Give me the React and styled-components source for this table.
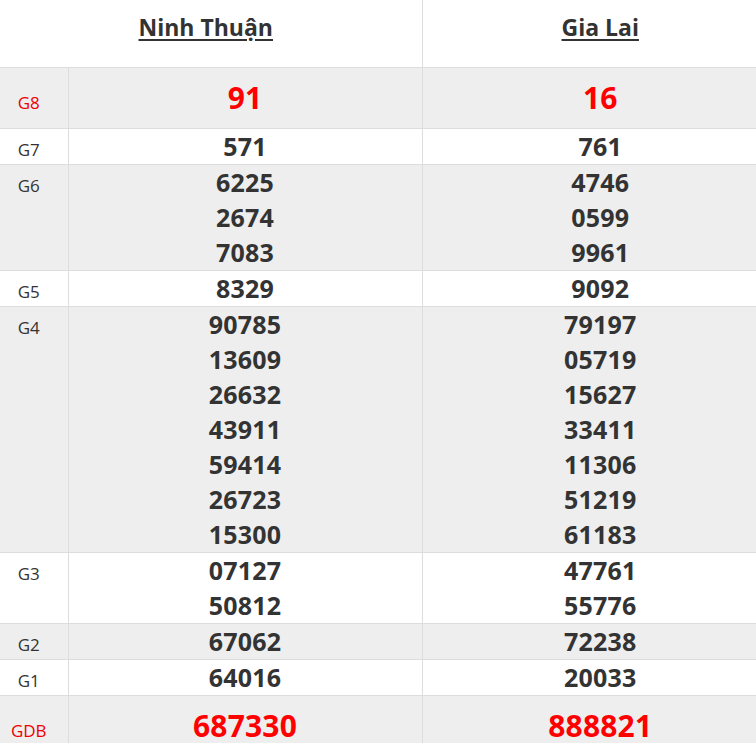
import React from 'react'
import styled, {createGlobalStyle} from 'styled-components'

const GlobalStyle = createGlobalStyle`
    html, body {
        margin: 0;
        padding: 0;
        background: #fff;
        overflow: hidden;
    }
    body {
        font-family: "Open Sans", "Liberation Sans", sans-serif;
        color: #333;
    }
`

const prizes = [
    {label: 'G8', big: true, a: ['91'], b: ['16']},
    {label: 'G7', a: ['571'], b: ['761']},
    {label: 'G6', a: ['6225', '2674', '7083'], b: ['4746', '0599', '9961']},
    {label: 'G5', a: ['8329'], b: ['9092']},
    {
        label: 'G4',
        a: ['90785', '13609', '26632', '43911', '59414', '26723', '15300'],
        b: ['79197', '05719', '15627', '33411', '11306', '51219', '61183']
    },
    {label: 'G3', a: ['07127', '50812'], b: ['47761', '55776']},
    {label: 'G2', a: ['67062'], b: ['72238']},
    {label: 'G1', a: ['64016'], b: ['20033']},
    {label: 'GDB', big: true, a: ['687330'], b: ['888821']}
]

const Viewport = styled.div`
    width: 100%;
    overflow: hidden;
`

const Table = styled.table`
    width: 778px;
    table-layout: fixed;
    border-collapse: collapse;
    border-spacing: 0;
`

const HeaderCell = styled.th`
    height: 67px;
    box-sizing: border-box;
    padding: 11px ${({$first}) => $first ? '10px' : '0'} 0 0;
    text-align: center;
    vertical-align: top;
    border-bottom: 1px solid #ddd;
    border-left: ${({$first}) => $first ? 'none' : '1px solid #ddd'};
    background: #fff;
`

const Province = styled.span`
    font-size: 23px;
    font-weight: 700;
    color: #333;
    text-decoration: underline;
    text-underline-offset: 3px;
    text-decoration-thickness: 2px;
`

const Row = styled.tr`
    background: ${({$gray}) => $gray ? '#eee' : '#fff'};
    border-bottom: 1px solid #ddd;
`

const Label = styled.td`
    padding: 0 10px 0 0;
    text-align: center;
    vertical-align: baseline;
    font-size: 17px;
    color: ${({$red}) => $red ? '#e00' : '#333'};
`

const NumberCell = styled.td`
    padding: 0;
    text-align: center;
    vertical-align: baseline;
    border-left: 1px solid #ddd;
`

const Number = styled.div`
    font-weight: 700;
    font-size: ${({$big}) => $big ? '30px' : '25px'};
    line-height: ${({$big}) => $big ? '60px' : '35px'};
    color: ${({$big}) => $big ? '#f00' : '#333'};
    letter-spacing: 0.2px;
`

const Numbers = ({list, big}) => (
    <NumberCell>
        {list.map((n, i) => <Number key={i} $big={big}>{n}</Number>)}
    </NumberCell>
)

export default function App() {
    return (
        <Viewport>
            <GlobalStyle/>
            <Table>
                <colgroup>
                    <col style={{width: 68}}/>
                    <col style={{width: 354}}/>
                    <col style={{width: 356}}/>
                </colgroup>
                <thead>
                    <tr>
                        <HeaderCell colSpan={2} $first><Province>Ninh Thuận</Province></HeaderCell>
                        <HeaderCell><Province>Gia Lai</Province></HeaderCell>
                    </tr>
                </thead>
                <tbody>
                    {prizes.map((p, i) => (
                        <Row key={p.label} $gray={i % 2 === 0}>
                            <Label $red={p.big}>{p.label}</Label>
                            <Numbers list={p.a} big={p.big}/>
                            <Numbers list={p.b} big={p.big}/>
                        </Row>
                    ))}
                </tbody>
            </Table>
        </Viewport>
    )
}
